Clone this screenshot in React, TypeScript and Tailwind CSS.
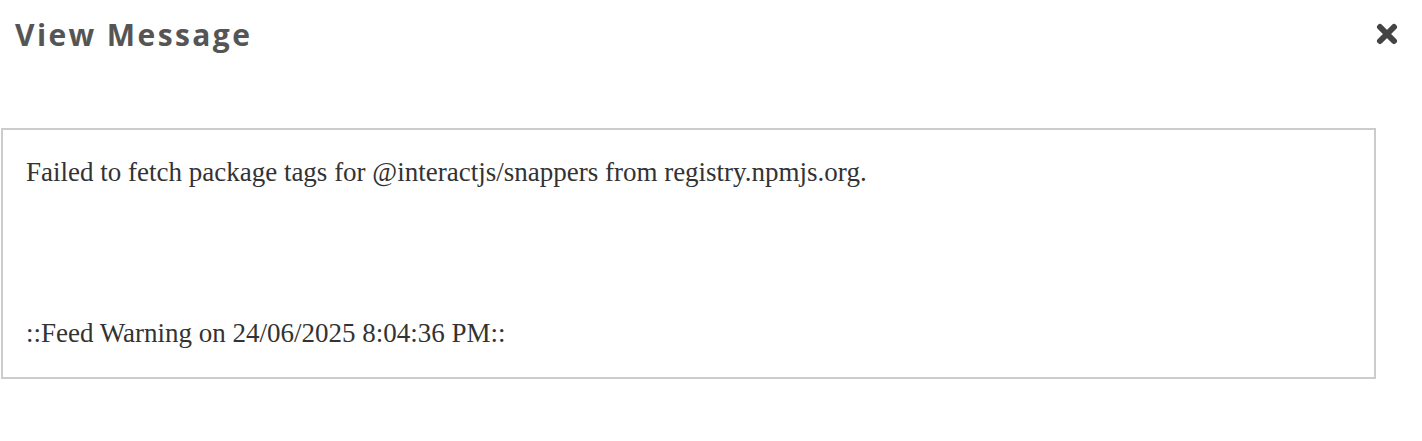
export default function App() {
  return (
    <div className="w-[1422px] h-[441px] bg-white">
      <div className="flex items-center justify-between pl-[15px] pr-[24px] h-[68px]">
        <h3 className="text-[30px] font-bold text-[#555] tracking-[2.4px] [font-family:'Open_Sans',sans-serif]">
          View Message
        </h3>
        <button className="text-[#444]">
          <svg width="22" height="22" viewBox="0 0 22 22">
            <path d="M4 4 L18 18 M18 4 L4 18" stroke="currentColor" strokeWidth="6" strokeLinecap="round" />
          </svg>
        </button>
      </div>
      <div className="mt-[60px] ml-[1px] w-[1375px] h-[251px] border-2 border-[#ccc] px-[23px] pt-[26px] [font-family:'Liberation_Serif',serif] text-[27px] text-[#333]">
        <p className="leading-[32px]">Failed to fetch package tags for @interactjs/snappers from registry.npmjs.org.</p>
        <p className="leading-[32px] mt-[129px]">::Feed Warning on 24/06/2025 8:04:36 PM::</p>
      </div>
    </div>
  );
}
